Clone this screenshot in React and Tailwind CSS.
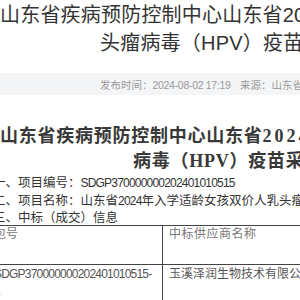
const sans = "font-['Liberation_Sans','Noto_Sans_CJK_SC',sans-serif]";
const cjk = "font-['Noto_Sans_CJK_SC',sans-serif]";

/* ASCII run inside the body list: narrower digits like the original */
function Num({ children }) {
  return <span className="font-['Liberation_Sans',sans-serif] text-[12px] tracking-[-0.8px]">{children}</span>;
}

export default function App() {
  return (
    <div className={`w-[300px] h-[300px] overflow-hidden bg-white ${sans}`}>
      {/* page title */}
      <h1 className="pt-px text-[20px] leading-[28px] font-normal text-[#333] tracking-[0.2px] whitespace-nowrap">
        <div>山东省疾病预防控制中心山东省2024年入学适龄女孩双价人乳</div>
        <div className="pl-[100px]">头瘤病毒（HPV）疫苗采购项目中标（成交）结果公告</div>
      </h1>

      {/* meta bar */}
      <div className="mt-[16px] h-[22px] bg-[#f4f5f7] flex items-center pt-[3px] pl-[100px] text-[10.5px] text-[#999] whitespace-nowrap">
        <span className="w-[140px] shrink-0">
          发布时间：<span className="tracking-[-0.3px]">2024-08-02 17:19</span>
        </span>
        <span>来源：山东省疾病预防控制中心</span>
      </div>

      {/* document body title */}
      <div className="mt-[29px] text-[18px] leading-[25px] font-bold text-[#383838] tracking-[0.75px] whitespace-nowrap">
        <div>
          山东省疾病预防控制中心山东省
          <span className="font-['Liberation_Serif',serif] tracking-[3px]">2024</span>
          年入学适龄女孩双价人乳头瘤
        </div>
        <div className="pl-[133px]">
          病毒（<span className="font-['Liberation_Serif',serif]">HPV</span>）疫苗采购项目结果公告
        </div>
      </div>

      {/* items */}
      <div className={`${cjk} text-[12.5px] leading-[15.5px] text-[#333] whitespace-nowrap`}>
        <div className="ml-[-7px]">
          一、项目编号：<Num>SDGP370000000202401010515</Num>
        </div>
        <div className="ml-[-7px]">
          二、项目名称：山东省<Num>2024</Num>年入学适龄女孩双价人乳头瘤病毒（HPV）疫苗采购项目
        </div>
        <div className="ml-[-7px]">三、中标（成交）信息</div>
      </div>

      {/* result table */}
      <div className={`ml-[-12px] border-t border-b border-[#444] ${cjk} text-[12px] whitespace-nowrap`}>
        <div className="flex h-[39px] border-b border-[#444]">
          <div className="w-[175px] shrink-0 border-r border-[#444] pl-[6px] leading-[14px] text-[#777]">包号</div>
          <div className="pl-[6px] leading-[14px] text-[#777] tracking-[0.5px]">中标供应商名称</div>
        </div>
        <div className="flex h-[37px]">
          <div className="w-[175px] shrink-0 border-r border-[#444] pl-[6px] leading-[15px] text-[#555]">
            <Num>SDGP370000000202401010515-</Num>
            <br />
            <Num>1</Num>
          </div>
          <div className="pl-[6px] leading-[15px] text-[#555]">玉溪泽润生物技术有限公司</div>
        </div>
      </div>
      <div className="h-[10px] bg-[#f2f2f2]" />
    </div>
  );
}
